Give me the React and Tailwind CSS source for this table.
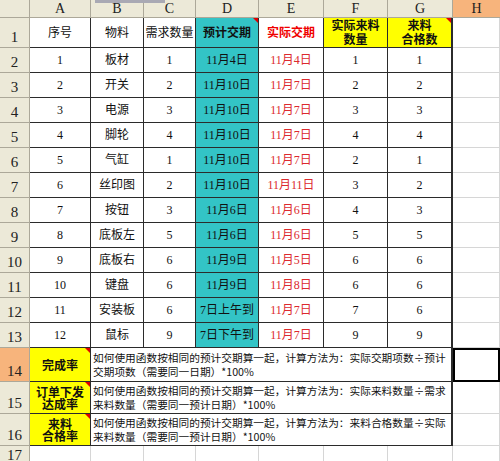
import React from 'react';

const rows = [
  ['1', '板材', '1', '11月4日', '11月4日', '1', '1'],
  ['2', '开关', '2', '11月10日', '11月7日', '2', '2'],
  ['3', '电源', '3', '11月10日', '11月7日', '3', '3'],
  ['4', '脚轮', '4', '11月10日', '11月7日', '4', '4'],
  ['5', '气缸', '1', '11月10日', '11月7日', '2', '1'],
  ['6', '丝印图', '2', '11月10日', '11月11日', '3', '2'],
  ['7', '按钮', '3', '11月6日', '11月6日', '4', '3'],
  ['8', '底板左', '5', '11月6日', '11月6日', '5', '5'],
  ['9', '底板右', '6', '11月9日', '11月5日', '6', '6'],
  ['10', '键盘', '6', '11月9日', '11月8日', '6', '6'],
  ['11', '安装板', '6', '7日上午到', '11月7日', '7', '6'],
  ['12', '鼠标', '9', '7日下午到', '11月7日', '9', '9'],
];

const notes = [
  {
    label: ['完成率'],
    lines: ['如何使用函数按相同的预计交期算一起，计算方法为：实际交期项数÷预计', '交期项数（需要同一日期）*100%'],
  },
  {
    label: ['订单下发', '达成率'],
    lines: ['如何使用函数按相同的预计交期算一起，计算方法为：实际来料数量÷需求', '来料数量（需要同一预计日期）*100%'],
  },
  {
    label: ['来料', '合格率'],
    lines: ['如何使用函数按相同的预计交期算一起，计算方法为：来料合格数量÷实际', '来料数量（需要同一预计日期）*100%'],
  },
];

const colHead = "bg-[#ece9d8] border-r border-b border-[#aca899] flex items-center justify-center text-[14px] leading-none text-[#222] font-['Liberation_Serif',serif]";
const rowHead = "bg-[#ece9d8] border-r border-b border-[#aca899] flex items-end justify-center pb-[2px] text-[15px] leading-none text-[#222] font-['Liberation_Serif',serif]";
const cell = "border-r border-b border-[#2b2b2b] flex items-center justify-center text-[12px] leading-none text-[#111] whitespace-nowrap";
const blank = "border-r border-b border-[#d6d6d6]";

const Flag = () => (
  <span className="absolute top-0 right-0 w-0 h-0 border-l-[5px] border-l-transparent border-t-[5px] border-t-[#e00000]" />
);

const App = () => {
  return (
    <div className="relative w-[500px] h-[461px] overflow-hidden bg-white font-['Liberation_Serif','Noto_Sans_CJK_SC',serif]">
      <div className="absolute top-0 left-[95px] w-[70px] h-[3px] bg-[#a9a9b4]" />
      <div className="grid grid-cols-[30px_61px_53px_52px_63px_65px_64px_65px_47px] grid-rows-[18px_30px_repeat(12,25px)_34px_32px_32px_20px]">
        {/* column headers */}
        <div className={colHead}></div>
        {['A', 'B', 'C', 'D', 'E', 'F', 'G'].map((c) => (
          <div key={c} className={colHead}>{c}</div>
        ))}
        <div className="bg-[#f7b47c] border-b border-[#aca899] flex items-center justify-center text-[14px] leading-none text-[#222] font-['Liberation_Serif',serif]">H</div>

        {/* row 1 */}
        <div className={rowHead}>1</div>
        <div className={cell}>序号</div>
        <div className={cell}>物料</div>
        <div className={cell}>需求数量</div>
        <div className={`${cell} relative bg-[#33c4c6] font-bold`}>预计交期<Flag /></div>
        <div className={`${cell} font-bold text-[#f00000]`}>实际交期</div>
        <div className={`${cell} bg-[#ffff00] font-bold flex-col gap-[2px] leading-[13px]`}>
          <span>实际来料</span>
          <span>数量</span>
        </div>
        <div className={`${cell} relative bg-[#ffff00] font-bold flex-col gap-[2px] leading-[13px] border-r-2`}>
          <span>来料</span>
          <span>合格数</span>
          <Flag />
        </div>
        <div className={blank}></div>

        {/* data rows */}
        {rows.map((r, i) => (
          <React.Fragment key={i}>
            <div className={rowHead}>{i + 2}</div>
            <div className={cell}>{r[0]}</div>
            <div className={cell}>{r[1]}</div>
            <div className={cell}>{r[2]}</div>
            <div className={`${cell} bg-[#33c4c6]`}>{r[3]}</div>
            <div className={`${cell} text-[#dc2a2e]`}>{r[4]}</div>
            <div className={cell}>{r[5]}</div>
            <div className={`${cell} border-r-2`}>{r[6]}</div>
            <div className={blank}></div>
          </React.Fragment>
        ))}

        {/* summary rows */}
        {notes.map((n, i) => (
          <React.Fragment key={'n' + i}>
            <div className={`${rowHead} ${i === 0 ? 'bg-[#f7b47c]' : ''}`}>{i + 14}</div>
            <div className={`${cell} relative bg-[#ffff00] font-bold text-[12px] flex-col leading-[14px] font-['Noto_Sans_CJK_SC',sans-serif]`}>
              {n.label.map((l) => (
                <span key={l}>{l}</span>
              ))}
              <Flag />
            </div>
            <div className="col-span-6 border-r-2 border-b border-[#2b2b2b] flex flex-col justify-center pl-[2px] text-[10.7px] leading-[14px] text-[#111] whitespace-nowrap font-['Noto_Sans_CJK_SC',sans-serif]">
              {n.lines.map((l) => (
                <span key={l}>{l}</span>
              ))}
            </div>
            <div className={i === 0 ? 'border-2 border-black' : blank}></div>
          </React.Fragment>
        ))}

        {/* row 17 */}
        <div className={rowHead}>17</div>
        {[0, 1, 2, 3, 4, 5, 6, 7].map((k) => (
          <div key={'b' + k} className={blank}></div>
        ))}
      </div>
    </div>
  );
};

export default App;
